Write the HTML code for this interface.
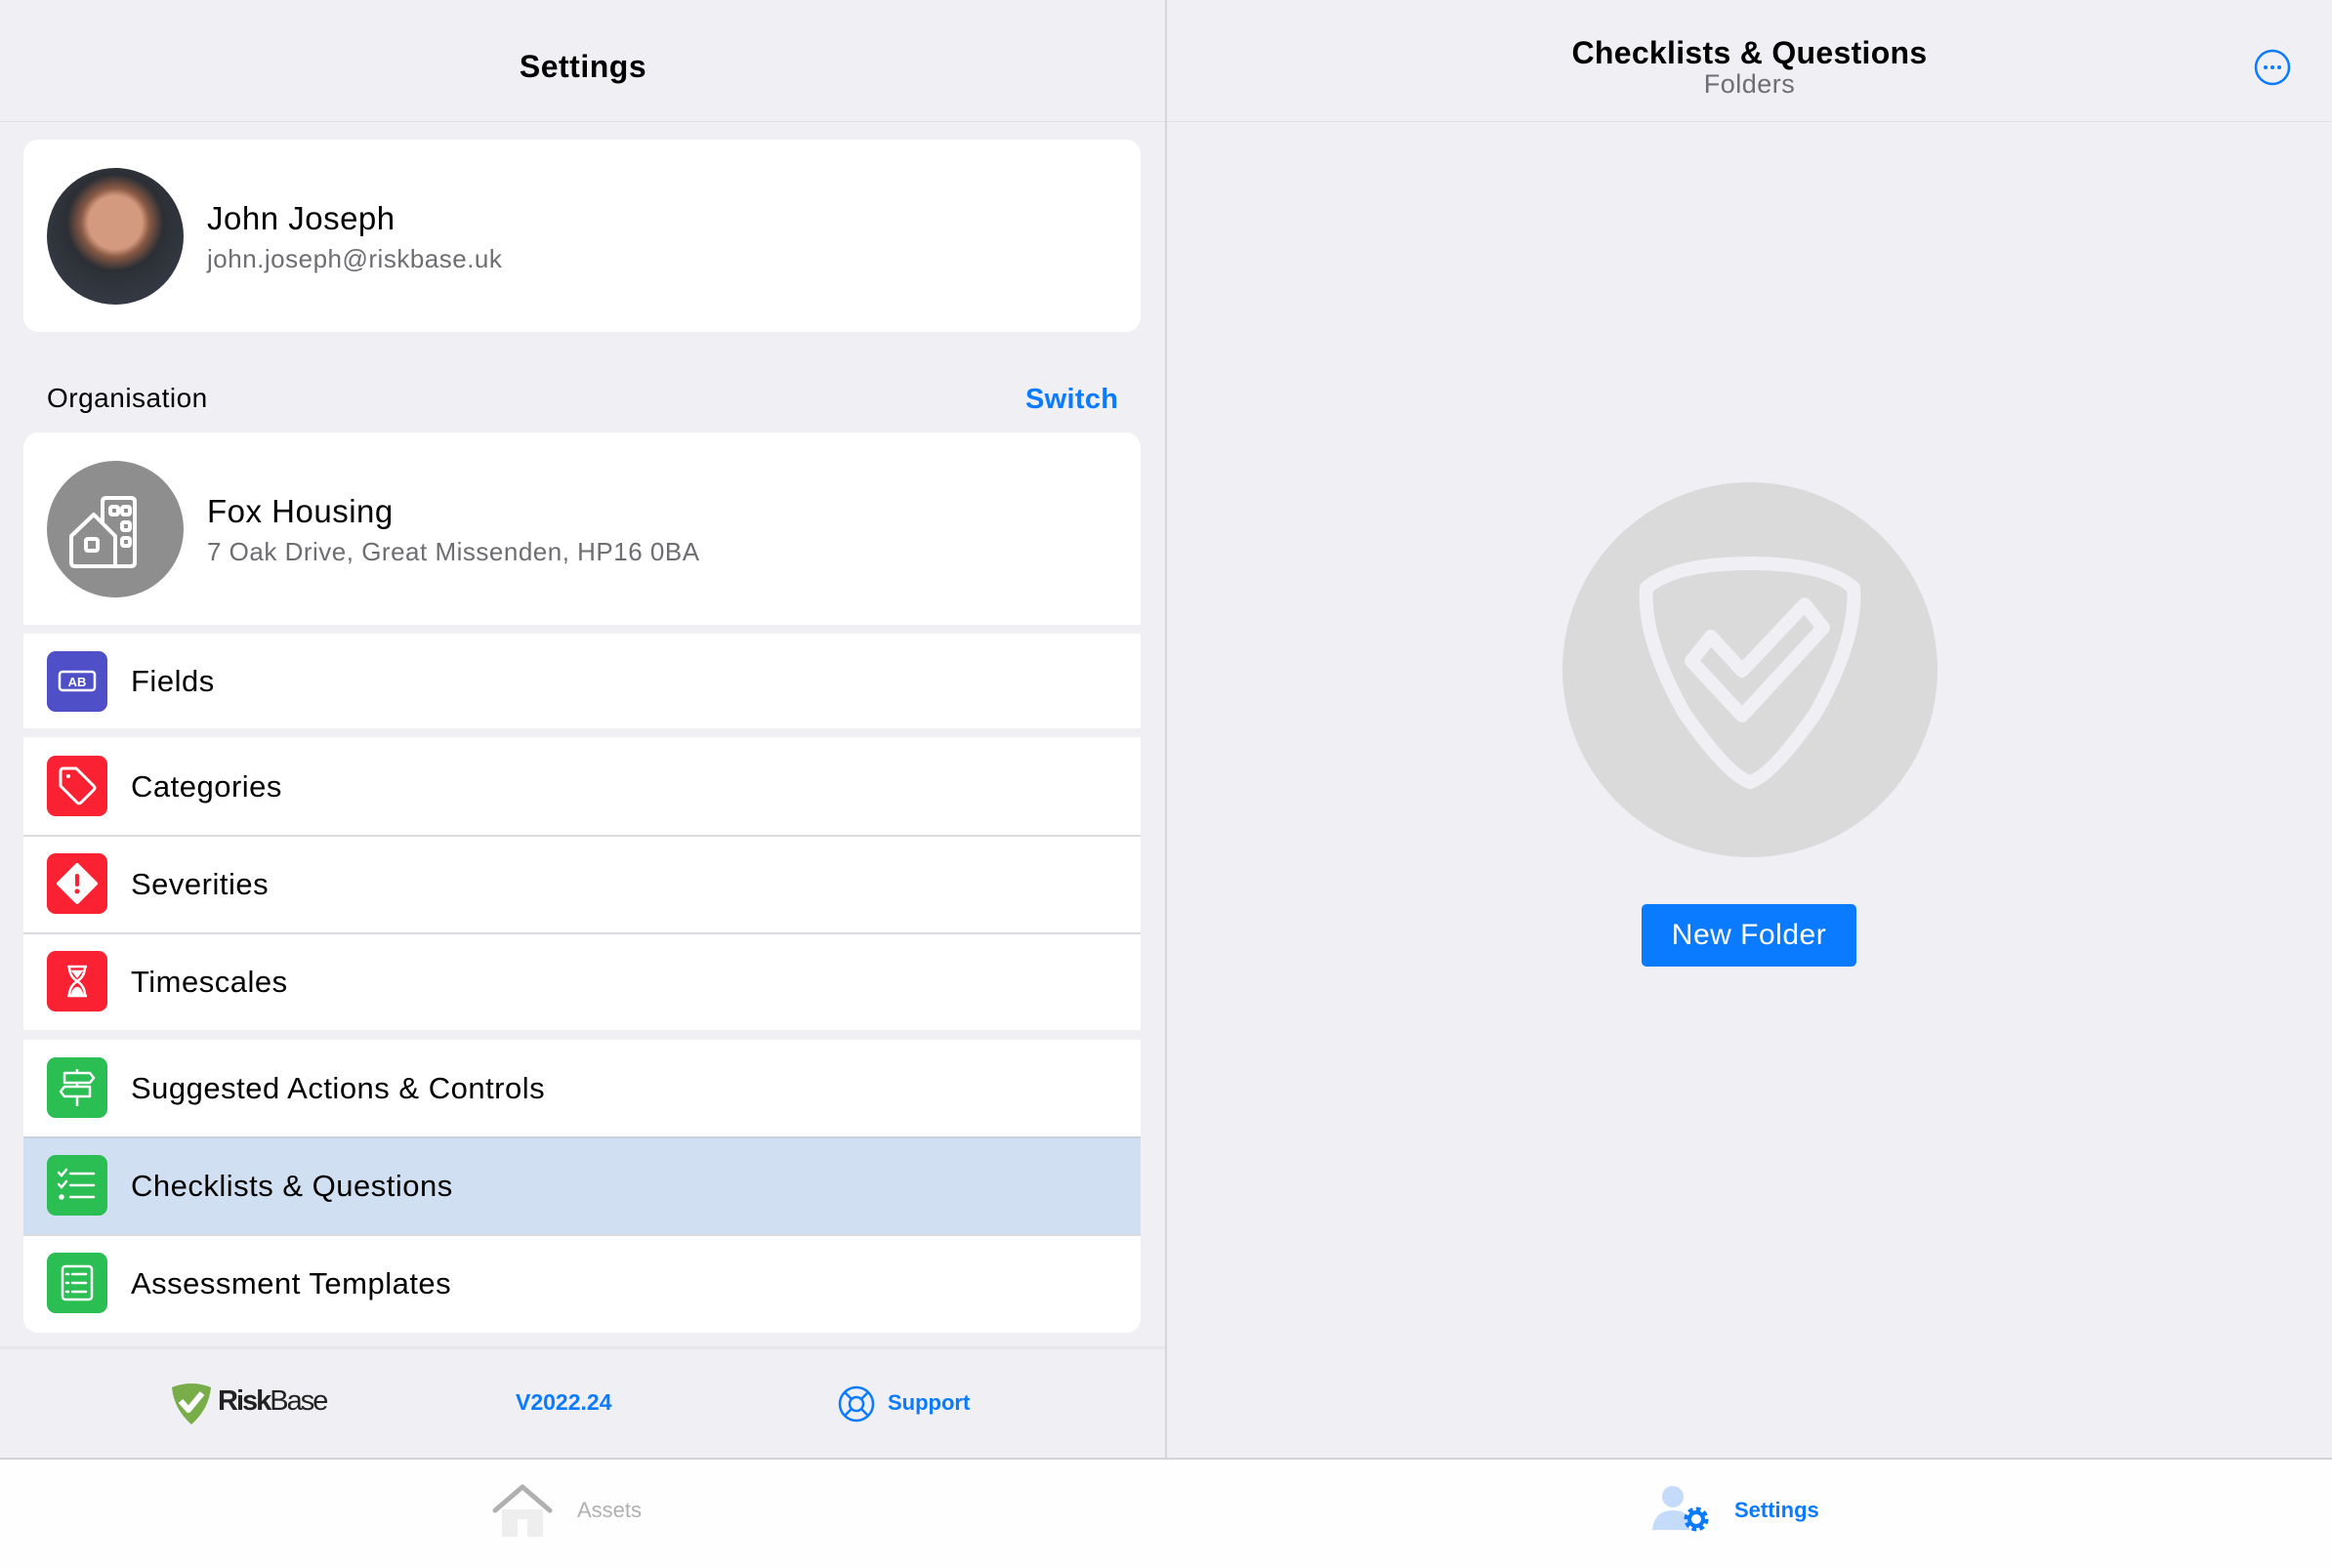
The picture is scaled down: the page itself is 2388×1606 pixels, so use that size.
<!DOCTYPE html>
<html><head><meta charset="utf-8"><style>
*{margin:0;padding:0;box-sizing:border-box}
body{width:2388px;height:1606px;background:#efeff4;font-family:"Liberation Sans",sans-serif;position:relative;overflow:hidden;color:#000}
.a{position:absolute}
.card{position:absolute;left:24px;width:1144px;background:#fff}
.row{position:absolute;left:24px;width:1144px;background:#fff}
.ic{position:absolute;left:24px;width:62px;height:62px;border-radius:9px;display:flex;align-items:center;justify-content:center}
.lbl{position:absolute;left:110px;font-size:31px;letter-spacing:.5px}
.sep{position:absolute;left:0;right:0;top:0;height:2px;background:#dcdce0}
</style></head><body>
<div class="a" style="left:0;top:0;width:1194px;height:125px;border-bottom:1px solid #e0e0e5"></div>
<div class="a" style="left:0;width:1194px;top:50px;text-align:center;font-size:32px;font-weight:bold;letter-spacing:.5px">Settings</div>
<div class="a" style="left:1193px;top:0;width:2px;height:1494px;background:#d6d6da"></div>

<div class="card" style="top:143px;height:197px;border-radius:15px"></div>
<div class="a" style="left:48px;top:172px;width:140px;height:140px;border-radius:50%;background:radial-gradient(circle at 50% 40%,#d49a80 0 25%,#8a5a45 32%,#2c2f35 45%,#3a4250 100%)"></div>
<div class="a" style="left:212px;top:205px;font-size:33px;letter-spacing:.5px">John Joseph</div>
<div class="a" style="left:212px;top:250px;font-size:26px;color:#6d6d72;letter-spacing:.5px">john.joseph@riskbase.uk</div>

<div class="a" style="left:48px;top:392px;font-size:28px;letter-spacing:.5px">Organisation</div>
<div class="a" style="left:1050px;top:393px;font-size:29px;font-weight:bold;color:#0a7aff;letter-spacing:.3px">Switch</div>

<div class="card" style="top:443px;height:197px;border-radius:15px 15px 0 0"></div>
<div class="a" style="left:48px;top:472px;width:140px;height:140px;border-radius:50%;background:#8e8e8e"></div>
<svg class="a" style="left:48px;top:472px" width="140" height="140" viewBox="0 0 140 140" fill="none" stroke="#fff" stroke-width="4" stroke-linejoin="round">
<path d="M25 77 L48 55 L70 77 V108 H29 Q25 108 25 104 Z"/><rect x="40" y="80" width="12" height="12" rx="2"/>
<path d="M57 63 V42 Q57 38 61 38 H86 Q90 38 90 42 V104 Q90 108 86 108 H70"/>
<rect x="65" y="47" width="8" height="8" rx="2"/><rect x="77" y="47" width="8" height="8" rx="2"/><rect x="77" y="63" width="8" height="8" rx="2"/><rect x="77" y="79" width="8" height="8" rx="2"/>
</svg>
<div class="a" style="left:212px;top:505px;font-size:33px;letter-spacing:.5px">Fox Housing</div>
<div class="a" style="left:212px;top:550px;font-size:26px;color:#6d6d72;letter-spacing:.5px">7 Oak Drive, Great Missenden, HP16 0BA</div>

<div class="row" style="top:649px;height:97px"><div class="ic" style="top:18px;background:#4f50c8">
<svg width="40" height="24" viewBox="0 0 40 24"><rect x="2" y="2" width="36" height="19" rx="3" fill="none" stroke="#fff" stroke-width="2.5"/><text x="20" y="17" font-size="13" fill="#fff" text-anchor="middle" font-family="Liberation Sans" font-weight="bold">AB</text></svg></div>
<div class="lbl" style="top:31px">Fields</div></div>

<div class="row" style="top:755px;height:300px"></div>
<div class="row" style="top:755px;height:100px"><div class="ic" style="top:19px;background:#fa2232">
<svg width="46" height="46" viewBox="0 0 46 46" fill="none" stroke="#fff" stroke-width="3" stroke-linejoin="round"><path d="M6 8 Q6 5 9 5 H22 L40 23 Q42 25 40 27 L27 40 Q25 42 23 40 L6 23 Z"/><circle cx="14" cy="13" r="2" fill="#fff" stroke="none"/></svg></div>
<div class="lbl" style="top:33px">Categories</div></div>
<div class="row" style="top:855px;height:100px"><div class="sep"></div><div class="ic" style="top:19px;background:#fa2232">
<svg width="46" height="46" viewBox="0 0 46 46"><path d="M23 4 L42 23 L23 42 L4 23 Z" fill="#fff" stroke="#fff" stroke-width="4" stroke-linejoin="round"/><rect x="21" y="13" width="4" height="13" rx="2" fill="#fa2232"/><circle cx="23" cy="31" r="2.5" fill="#fa2232"/></svg></div>
<div class="lbl" style="top:33px">Severities</div></div>
<div class="row" style="top:955px;height:100px"><div class="sep"></div><div class="ic" style="top:19px;background:#fa2232">
<svg width="46" height="46" viewBox="0 0 46 46" fill="none" stroke="#fff" stroke-width="2.5"><path d="M13 8 H33 M13 38 H33 M15 8 Q15 18 23 23 Q31 18 31 8 M15 38 Q15 28 23 23 Q31 28 31 38"/><path d="M19 13 H27 L23 18 Z M18 36 Q20 30 23 30 Q26 30 28 36 Z" fill="#fff"/></svg></div>
<div class="lbl" style="top:33px">Timescales</div></div>

<div class="row" style="top:1065px;height:300px;border-radius:0 0 15px 15px"></div>
<div class="row" style="top:1065px;height:99px"><div class="ic" style="top:18px;background:#2bbe52">
<svg width="46" height="46" viewBox="0 0 46 46" fill="none" stroke="#fff" stroke-width="2.5" stroke-linejoin="round"><path d="M10 8 H36 L40 13 L36 18 H10 Z M36 22 H10 L6 27 L10 32 H36 Z M23 4 V8 M23 18 V22 M23 32 V42"/></svg></div>
<div class="lbl" style="top:32px">Suggested Actions &amp; Controls</div></div>
<div class="row" style="top:1164px;height:100px;background:#d1dff2"><div class="sep" style="background:#c8d3e2"></div><div class="ic" style="top:19px;background:#2bbe52">
<svg width="46" height="46" viewBox="0 0 46 46" fill="none" stroke="#fff" stroke-width="2.5" stroke-linecap="round"><path d="M16 11 H40 M16 23 H40 M16 35 H40 M4 10 L7 13 L12 7 M4 22 L7 25 L12 19"/><circle cx="7" cy="35" r="1.5" fill="#fff"/></svg></div>
<div class="lbl" style="top:33px">Checklists &amp; Questions</div></div>
<div class="row" style="top:1264px;height:101px;border-radius:0 0 15px 15px"><div class="sep"></div><div class="ic" style="top:19px;background:#2bbe52">
<svg width="46" height="46" viewBox="0 0 46 46" fill="none" stroke="#fff" stroke-width="2.5" stroke-linecap="round"><rect x="8" y="6" width="30" height="34" rx="3"/><path d="M18 14 H32 M18 23 H32 M18 32 H32 M12 14 H14 M12 23 H14 M12 32 H14"/></svg></div>
<div class="lbl" style="top:33px">Assessment Templates</div></div>

<div class="a" style="left:0;top:1379px;width:1193px;height:3px;background:#e6e6ea"></div>
<svg class="a" style="left:172px;top:1413px" width="48" height="48" viewBox="0 0 48 48"><path d="M4 8 Q24 0 44 8 Q42 30 24 46 Q6 30 4 8 Z" fill="#79ad4a"/><path d="M13 22 L21 31 L35 14" fill="none" stroke="#fff" stroke-width="6" stroke-linejoin="round"/></svg>
<div class="a" style="left:223px;top:1419px;font-size:29px;letter-spacing:-2px;color:#222"><b style="font-weight:bold">Risk</b>Base</div>
<div class="a" style="left:528px;top:1423px;font-size:23px;font-weight:bold;color:#0a7aff">V2022.24</div>
<svg class="a" style="left:857px;top:1418px" width="40" height="40" viewBox="0 0 40 40" fill="none" stroke="#0a7aff" stroke-width="2.5"><circle cx="20" cy="20" r="17"/><circle cx="20" cy="20" r="7"/><path d="M8 8 L15 15 M32 8 L25 15 M8 32 L15 25 M32 32 L25 25"/></svg>
<div class="a" style="left:909px;top:1424px;font-size:22px;font-weight:bold;color:#0a7aff">Support</div>

<div class="a" style="left:0;top:1493px;width:2388px;height:113px;background:#fefefe;border-top:2px solid #d4d4d8"></div>
<svg class="a" style="left:504px;top:1518px" width="62" height="58" viewBox="0 0 62 58"><path d="M10 28 V56 H26 V38 H36 V56 H52 V28" fill="#eeeeee"/><path d="M3 29 L31 5 L59 29" fill="none" stroke="#b0b0b0" stroke-width="5" stroke-linecap="round" stroke-linejoin="round"/></svg>
<div class="a" style="left:591px;top:1534px;font-size:22px;color:#b0b0b0">Assets</div>
<svg class="a" style="left:1690px;top:1521px" width="64" height="52" viewBox="0 0 64 52"><circle cx="23" cy="12" r="11" fill="#c4dcfa"/><path d="M2 46 Q4 26 23 26 Q36 26 40 34 L40 46 Z" fill="#c4dcfa"/><circle cx="47" cy="35" r="9" fill="none" stroke="#0a7aff" stroke-width="7" stroke-dasharray="4 3"/><circle cx="47" cy="35" r="7" fill="none" stroke="#0a7aff" stroke-width="4"/></svg>
<div class="a" style="left:1776px;top:1534px;font-size:22px;font-weight:bold;color:#0a7aff">Settings</div>

<div class="a" style="left:1195px;top:0;width:1193px;height:125px;border-bottom:1px solid #e0e0e5"></div>
<div class="a" style="left:1195px;width:1193px;top:36px;text-align:center;font-size:32px;font-weight:bold;letter-spacing:.3px">Checklists &amp; Questions</div>
<div class="a" style="left:1195px;width:1193px;top:71px;text-align:center;font-size:27px;color:#6d6d72;letter-spacing:.5px">Folders</div>
<svg class="a" style="left:2308px;top:50px" width="38" height="38" viewBox="0 0 38 38"><circle cx="19" cy="19" r="17" fill="none" stroke="#0a7aff" stroke-width="2.5"/><circle cx="12" cy="19" r="2" fill="#0a7aff"/><circle cx="19" cy="19" r="2" fill="#0a7aff"/><circle cx="26" cy="19" r="2" fill="#0a7aff"/></svg>

<svg class="a" style="left:1600px;top:494px" width="384" height="384" viewBox="0 0 384 384"><circle cx="192" cy="192" r="192" fill="#dadada"/>
<g fill="none" stroke="#efeff4" stroke-width="14" stroke-linejoin="round"><path d="M86 108 Q115 83 192 83 Q269 83 298 108 Q302 160 260 235 Q215 300 192 307 Q169 300 124 235 Q82 160 86 108 Z"/><path d="M152 158 L184 193 L248 125 L267 149 L184 239 L132 183 Z"/></g></svg>

<div class="a" style="left:1681px;top:926px;width:220px;height:64px;background:#0a7aff;border-radius:5px;color:#fff;font-size:30px;text-align:center;line-height:64px;letter-spacing:.5px">New Folder</div>
</body></html>
